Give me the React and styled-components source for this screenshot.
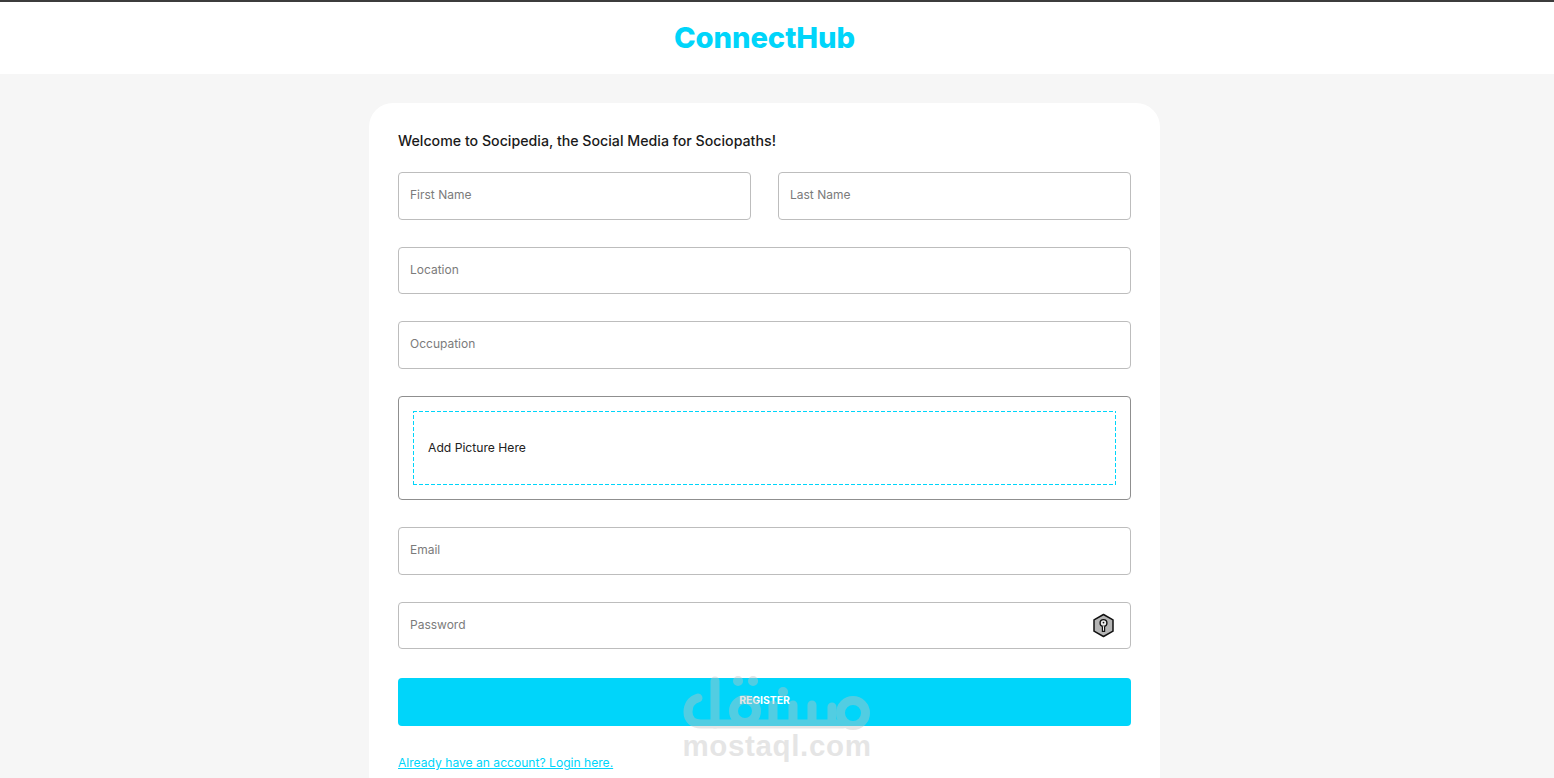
import React from "react";
import styled, { createGlobalStyle } from "styled-components";

const CYAN = "#00d5fa";

const GlobalStyle = createGlobalStyle`
  html, body {
    margin: 0;
    height: 100%;
    overflow: hidden;
    background: #f6f6f6;
    font-family: Inter, "Noto Sans", "Liberation Sans", sans-serif;
  }
  * { box-sizing: border-box; }
`;

const Page = styled.div`
  position: relative;
  height: 778px;
  overflow: hidden;
`;

/* the original page reserves 25px on the right, content centres on 764.5 */
const Header = styled.header`
  height: 74px;
  padding-right: 25px;
  background: #fff;
  border-top: 2px solid #3c3c3c;
  display: flex;
  align-items: center;
  justify-content: center;
`;

const Logo = styled.h1`
  margin: 0;
  font-size: 29.2px;
  font-weight: 800;
  letter-spacing: -0.1px;
  color: ${CYAN};
  line-height: 1;
`;

const Content = styled.div`
  padding-right: 25px;
`;

const Card = styled.main`
  width: 791px;
  margin: 29px auto 0;
  padding: 29px;
  background: #fff;
  border-radius: 24px;
`;

const Welcome = styled.p`
  margin: 0 0 22px;
  height: 18px;
  font-size: 14.2px;
  line-height: 18px;
  font-weight: 500;
  color: #1a1a1a;
`;

const Form = styled.form`
  display: grid;
  grid-template-columns: 1fr 1fr;
  column-gap: 27px;
  row-gap: 27px;
`;

const FieldBox = styled.div`
  grid-column: ${(p) => (p.$half ? "span 1" : "1 / -1")};
  height: ${(p) => (p.$short ? "47px" : "48px")};
  padding: 0 15px ${(p) => (p.$short ? "0" : "2px")} 11px;
  display: flex;
  align-items: center;
  justify-content: space-between;
  border: 1px solid #bdbdbd;
  border-radius: 4px;
  background: #fff;
`;

const Placeholder = styled.span`
  margin-bottom: 2px;
  font-size: 12px;
  color: #7b7b7b;
`;

const UploadBox = styled.div`
  grid-column: 1 / -1;
  height: 104px;
  padding: 14px;
  border: 1px solid #8f8f8f;
  border-radius: 4px;
`;

const DropZone = styled.div`
  height: 100%;
  padding: 0 15px 1px;
  display: flex;
  align-items: center;
  font-size: 12.15px;
  color: #222;
  background:
    repeating-linear-gradient(90deg, ${CYAN} 0 4px, transparent 4px 6px) top / 100% 1px no-repeat,
    repeating-linear-gradient(90deg, ${CYAN} 0 4px, transparent 4px 6px) bottom / 100% 1px no-repeat,
    repeating-linear-gradient(0deg, ${CYAN} 0 4px, transparent 4px 6px) left / 1px 100% no-repeat,
    repeating-linear-gradient(0deg, ${CYAN} 0 4px, transparent 4px 6px) right / 1px 100% no-repeat;
`;

const SubmitButton = styled.button`
  grid-column: 1 / -1;
  height: 48px;
  margin-top: 2px;
  padding: 0 0 4px;
  border: 0;
  border-radius: 4px;
  background: ${CYAN};
  color: #fff;
  font: 700 10.4px Inter, "Noto Sans", sans-serif;
  text-transform: uppercase;
`;

const LoginLink = styled.a`
  display: block;
  margin-top: 29px;
  font-size: 12.1px;
  color: ${CYAN};
  text-decoration: underline;
`;

const Watermark = styled.div`
  position: absolute;
  left: 683px;
  top: 676px;
  width: 188px;
  display: flex;
  flex-direction: column;
  align-items: center;
  opacity: 0.42;
  color: #c3c3c3;
  pointer-events: none;
`;

const WatermarkText = styled.span`
  font: 700 29.5px/30px "Liberation Sans", sans-serif;
  letter-spacing: 0.65px;
  white-space: nowrap;
`;

const KeyIcon = () => (
  <svg width="23" height="25" viewBox="0 0 23 25" aria-hidden="true">
    <path d="M11.5 1.5 21 6.8v11.4l-9.5 5.3L2 18.2V6.8z" fill="#b5b5b5" stroke="#111" strokeWidth="1.5" strokeLinejoin="round" />
    <circle cx="11.5" cy="10" r="3.4" fill="#eee" stroke="#111" strokeWidth="1.4" />
    <circle cx="11.5" cy="9.6" r="0.9" fill="#111" />
    <path d="M10.4 13.2v5.2h2.2v-5.2" fill="#eee" stroke="#111" strokeWidth="1.2" />
  </svg>
);

const WatermarkLogo = () => (
  <svg width="188" height="55" viewBox="0 0 188 55" fill="none" stroke="currentColor" strokeWidth="9" strokeLinecap="round" strokeLinejoin="round" aria-hidden="true">
    <path d="M15 22C8 24 5 30 5 36c0 8 6 12 13 12h14V5" />
    <path d="M32 48h128" />
    <circle cx="62" cy="35" r="11.5" />
    <path d="M90 47V29M110 47V29M129 47V29M149 47V31" />
    <circle cx="170" cy="37" r="12.5" />
    <path d="M55 5h.1M70 5h.1M100 16h.1" strokeWidth="10" />
  </svg>
);

export default function App() {
  return (
    <Page>
      <GlobalStyle />
      <Header>
        <Logo>ConnectHub</Logo>
      </Header>
      <Content>
        <Card>
          <Welcome>Welcome to Socipedia, the Social Media for Sociopaths!</Welcome>
          <Form>
            <FieldBox $half>
              <Placeholder>First Name</Placeholder>
            </FieldBox>
            <FieldBox $half>
              <Placeholder>Last Name</Placeholder>
            </FieldBox>
            <FieldBox $short>
              <Placeholder>Location</Placeholder>
            </FieldBox>
            <FieldBox>
              <Placeholder>Occupation</Placeholder>
            </FieldBox>
            <UploadBox>
              <DropZone>Add Picture Here</DropZone>
            </UploadBox>
            <FieldBox>
              <Placeholder>Email</Placeholder>
            </FieldBox>
            <FieldBox $short>
              <Placeholder>Password</Placeholder>
              <KeyIcon />
            </FieldBox>
            <SubmitButton type="button">Register</SubmitButton>
          </Form>
          <LoginLink href="#">Already have an account? Login here.</LoginLink>
        </Card>
      </Content>
      <Watermark>
        <WatermarkLogo />
        <WatermarkText>mostaql.com</WatermarkText>
      </Watermark>
    </Page>
  );
}
